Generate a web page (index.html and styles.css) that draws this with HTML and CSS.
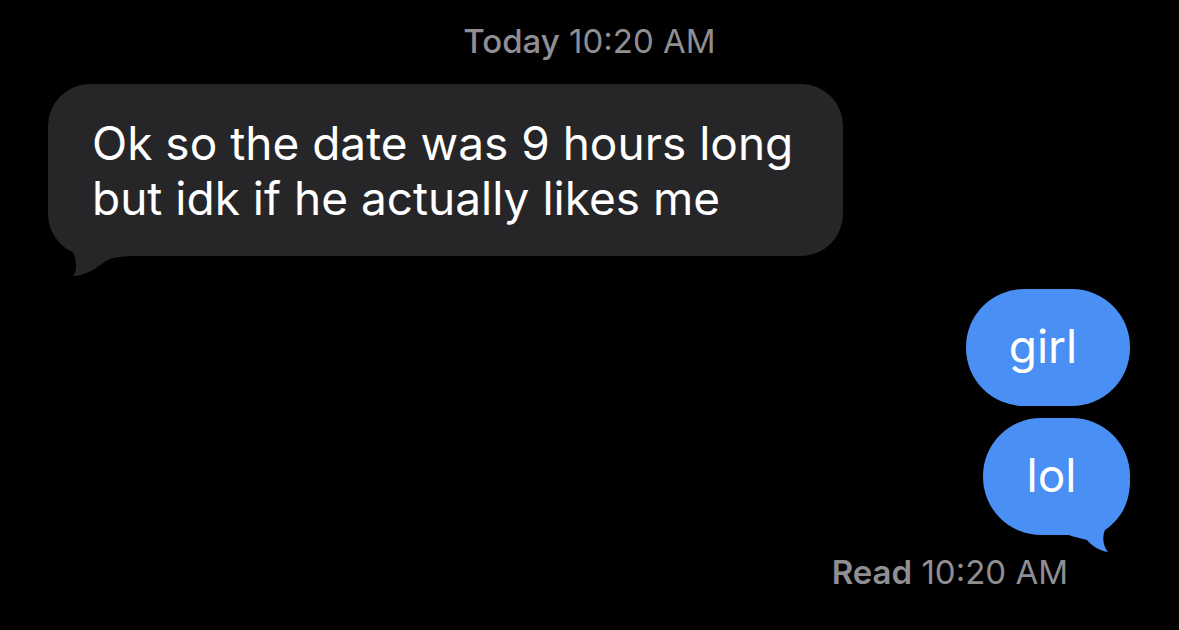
FILE: index.html
```html
<!DOCTYPE html>
<html lang="en">
  <head>
    <meta charset="UTF-8" />
    <meta name="viewport" content="width=device-width, initial-scale=1.0" />
    <title>Messages</title>
    <link rel="stylesheet" href="styles.css">
  </head>
  <body>
    <div class="thread">
      <div class="stamp"><span class="stamp-day">Today</span> 10:20 AM</div>

      <div class="bubble incoming">
        <svg class="tail tail-left" width="90" height="70" viewBox="0 0 90 70">
          <path d="M0,0 C0,24 12,38 25,44 C28,52 30,61 25,68 C35,68 46,62 55,55 C62,50 70,48 90,48 L90,0 Z" />
        </svg>
        <span class="bubble-text">Ok so the date was 9 hours long<br />but idk if he actually likes me</span>
      </div>

      <div class="bubble outgoing first"><span class="bubble-text">girl</span></div>
      <div class="bubble outgoing last">
        <svg class="tail tail-right" width="75" height="75" viewBox="0 0 75 75">
          <path d="M70,0 C70,22 62,38 45,50 C42,57 43,66 48,72 C40,71 32,66 27,60 C18,58 8,55 0,52 L0,0 Z" />
        </svg>
        <span class="bubble-text">lol</span>
      </div>

      <div class="receipt"><span class="receipt-label">Read</span> 10:20 AM</div>
    </div>
  </body>
</html>
```

FILE: styles.css
```css
body {
  margin: 0;
  padding: 0;
  width: 100%;
  height: 100vh;
  background: black;
  font-family: Inter, "Noto Sans", sans-serif;
  overflow: hidden;
}
.thread {
  display: flex;
  flex-direction: column;
}
.stamp {
  padding-top: 21px;
  font-size: 33px;
  line-height: 40px;
  text-align: center;
  color: #8e8e93;
}
.stamp-day {
  font-weight: 500;
}
.bubble {
  position: relative;
  color: white;
  font-size: 46px;
  line-height: 55px;
  box-sizing: border-box;
}
.bubble-text {
  position: relative;
}
.incoming {
  align-self: flex-start;
  margin-top: 23px;
  margin-left: 48px;
  width: 795px;
  height: 172px;
  padding: 32px 10px 0 44px;
  background: #262628;
  border-radius: 42px;
}
.outgoing {
  align-self: flex-end;
  margin-right: 49px;
  height: 117px;
  padding: 30px 10px 0 0;
  text-align: center;
  background: #4a8ff4;
  border-radius: 58px;
}
.outgoing.first {
  margin-top: 33px;
  width: 164px;
}
.outgoing.last {
  margin-top: 12px;
  width: 147px;
}
.tail {
  position: absolute;
  display: block;
}
.tail-left {
  left: 0;
  bottom: -22px;
  fill: #262628;
}
.tail-right {
  right: -5px;
  bottom: -20px;
  fill: #4a8ff4;
}
.receipt {
  align-self: flex-end;
  margin-top: 17px;
  margin-right: 111px;
  font-size: 33px;
  line-height: 40px;
  color: #8e8e93;
}
.receipt-label {
  font-weight: 600;
}
```
